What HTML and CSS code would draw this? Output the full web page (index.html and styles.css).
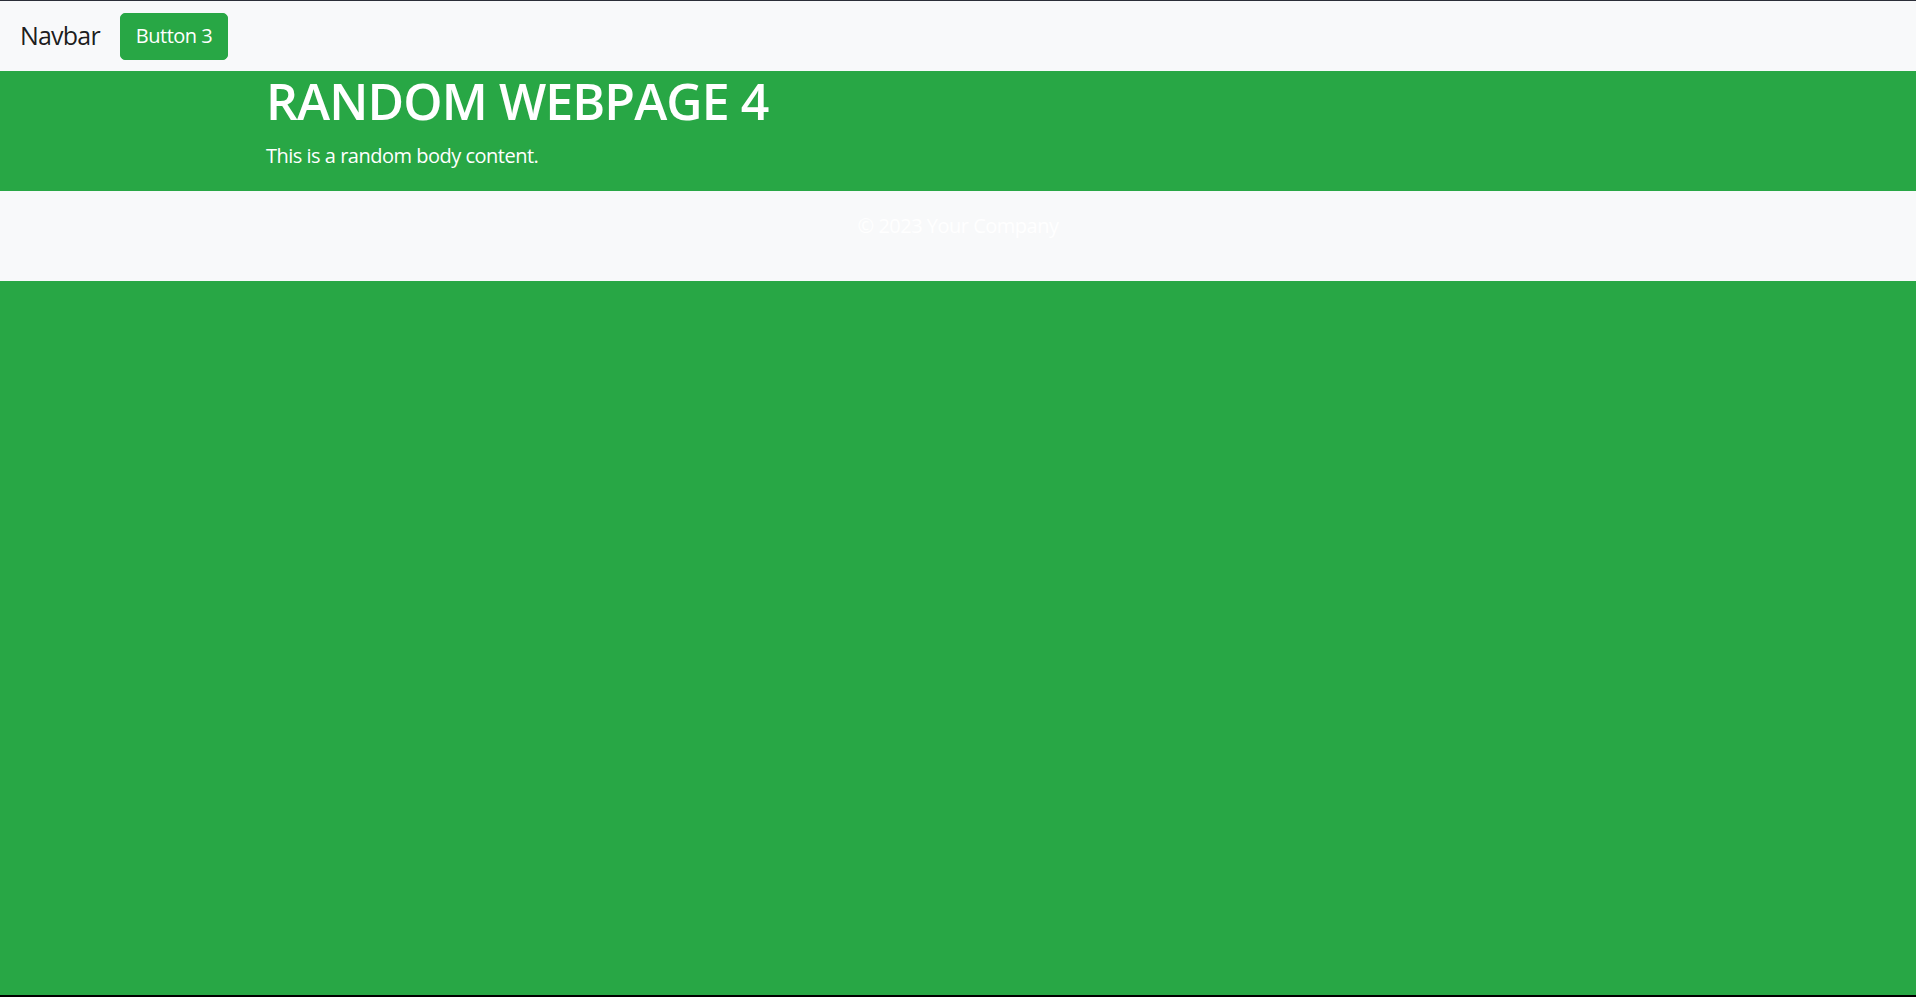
FILE: index.html
```html
<!DOCTYPE html>
<html lang="en">
<head>
<meta charset="utf-8">
<title>Random Webpage 4</title>
<link rel="stylesheet" href="styles.css">
</head>
<body>
  <nav class="navbar">
    <span class="navbar-brand">Navbar</span>
    <button class="btn">Button 3</button>
  </nav>
  <section class="hero">
    <div class="container">
      <h1 class="title">RANDOM WEBPAGE 4</h1>
      <p class="text">This is a random body content.</p>
    </div>
  </section>
  <footer class="footer">
    <p class="footer-text">© 2023 Your Company</p>
  </footer>
</body>
</html>
```

FILE: styles.css
```css
html {
  background: #000;
}
body {
  margin: 0;
  height: calc(100vh - 3px);
  border-top: 1px solid #2b2e38;
  background: #28a745;
  font-family: "Open Sans", "Noto Sans", sans-serif;
  font-size: 20px;
  line-height: 1.5;
  color: #212529;
}
.navbar {
  display: flex;
  align-items: center;
  height: 70px;
  box-sizing: border-box;
  padding: 10px 20px;
  background: #f8f9fa;
}
.navbar-brand {
  font-size: 25px;
  line-height: 1.5;
  letter-spacing: -0.8px;
  color: rgba(0, 0, 0, 0.9);
  margin-right: 20px;
}
.btn {
  font-family: inherit;
  font-size: 20px;
  line-height: 1.5;
  letter-spacing: -0.5px;
  color: #fff;
  background: #28a745;
  border: 1px solid #28a745;
  border-radius: 5px;
  padding: 7.5px 15px;
  height: 47px;
}
.hero {
  background: #28a745;
  color: #fff;
}
.container {
  padding-left: 266px;
}
.title {
  margin: 0 0 10px;
  font-size: 50px;
  font-weight: 600;
  line-height: 60px;
  letter-spacing: -0.9px;
}
.text {
  margin: 0 0 20px;
  font-size: 20px;
  line-height: 30px;
  letter-spacing: -0.5px;
}
.footer {
  background: #f8f9fa;
  color: #fff;
  text-align: center;
  padding: 20px 0;
}
.footer-text {
  margin: 0 0 20px;
  line-height: 30px;
  letter-spacing: -0.5px;
}
```
